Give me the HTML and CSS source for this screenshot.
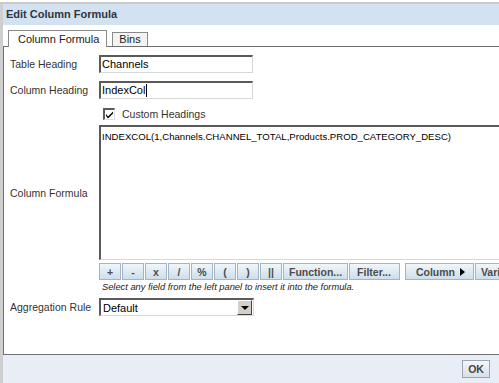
FILE: index.html
```html
<!DOCTYPE html>
<html lang="en">
<head>
  <meta charset="UTF-8">
  <title>Edit Column Formula</title>
  <link rel="stylesheet" href="styles.css">
</head>
<body>

<div class="dialog">
  <div class="title">Edit Column Formula</div>

  <div class="tabs">
    <div class="tab active">Column Formula</div>
    <div class="tab">Bins</div>
  </div>

  <div class="panel">
    <div class="form">
      <label class="lbl spaced">Table Heading</label>
      <div class="field">Channels</div>

      <label class="lbl spaced">Column Heading</label>
      <div class="field">IndexCol<span class="caret"></span></div>

      <span></span>
      <div class="check-row">
        <span class="checkbox">
          <svg width="9" height="9" viewBox="0 0 9 9"><path d="M1 4 L3 6.5 L8 1.5 L8 3.5 L3 8.5 L1 6 Z" fill="#000"/></svg>
        </span>
        Custom Headings
      </div>

      <label class="lbl">Column Formula</label>
      <div class="formula">INDEXCOL(1,Channels.CHANNEL_TOTAL,Products.PROD_CATEGORY_DESC)</div>

      <span></span>
      <div class="toolbar">
        <button class="op">+</button>
        <button class="op">-</button>
        <button class="op">x</button>
        <button class="op">/</button>
        <button class="op">%</button>
        <button class="op">(</button>
        <button class="op">)</button>
        <button class="op">||</button>
        <button class="wide">Function...</button>
        <button class="wide filter">Filter...</button>
        <button class="wide menu">Column <span class="tri"></span></button>
        <button class="wide">Variable</button>
      </div>

      <span></span>
      <div class="hint">Select any field from the left panel to insert it into the formula.</div>

      <label class="lbl">Aggregation Rule</label>
      <div class="select">
        <span class="sel-text">Default</span>
        <span class="sel-btn"><span class="down"></span></span>
      </div>
    </div>
  </div>

  <div class="footer">
    <button class="ok">OK</button>
  </div>
</div>

</body>
</html>
```

FILE: styles.css
```css
body {
  margin: 0;
  padding: 0;
  background-color: #fff;
  font-family: "Liberation Sans", Arial, sans-serif;
  overflow: hidden;
  width: 499px;
  height: 383px;
}

.dialog {
  margin-top: 2px;
  height: 381px;
  border-top: 2px solid #c9c9c9;
  border-left: 3px solid #cfcfcf;
  box-sizing: border-box;
  display: flex;
  flex-direction: column;
}

.title {
  height: 21px;
  line-height: 21px;
  padding-left: 3px;
  background-color: #d3e2f1;
  color: #2f3640;
  font-size: 11px;
  font-weight: bold;
}

.tabs {
  height: 21px;
  display: flex;
  align-items: flex-end;
  padding-left: 5px;
  gap: 5px;
}

.tab {
  font-size: 11px;
  color: #222;
  border: 1px solid #8a8a8a;
  border-bottom: none;
  background-color: #f4f4f4;
  height: 13px;
  line-height: 13px;
  padding: 0 6px;
}

.tab.active {
  background-color: #fff;
  height: 16px;
  line-height: 17px;
  padding: 0 7px 0 9px;
  margin-bottom: -1px;
  position: relative;
  z-index: 1;
}

.panel {
  flex: 1;
  border: 1px solid #6f6f6f;
  margin-right: -30px;
  background-color: #fff;
}

.form {
  display: grid;
  grid-template-columns: 89px 1fr;
  align-items: center;
  padding: 8px 0 0 6px;
  font-size: 10.5px;
  color: #333;
}

.lbl {
  font-size: 10.5px;
}

.lbl.spaced {
  margin-bottom: 8px;
}

.field {
  width: 150px;
  height: 15px;
  line-height: 15px;
  border-style: solid;
  border-width: 2px 1px 1px 2px;
  border-color: #5a5a5a #d8d8d8 #d8d8d8 #5a5a5a;
  font-size: 11px;
  color: #000;
  padding-left: 1px;
  margin-bottom: 8px;
  display: flex;
  align-items: center;
}

.caret {
  display: inline-block;
  width: 1px;
  height: 13px;
  background-color: #000;
  margin-left: 1px;
}

.check-row {
  display: flex;
  align-items: center;
  height: 18px;
  gap: 7px;
  padding-left: 4px;
  margin: -2px 0 2px;
}

.checkbox {
  width: 9px;
  height: 9px;
  border-style: solid;
  border-width: 2px 1px 1px 2px;
  border-color: #5a5a5a #e0e0e0 #e0e0e0 #5a5a5a;
  display: flex;
  align-items: center;
  justify-content: center;
}

.formula {
  border-style: solid;
  border-width: 2px 1px 1px 2px;
  border-color: #5a5a5a #d8d8d8 #d8d8d8 #5a5a5a;
  font-size: 9.6px;
  color: #000;
  padding: 4px 1px;
  box-sizing: content-box;
  height: 124px;
  margin-right: -10px;
}

.toolbar {
  display: flex;
  gap: 1px;
  margin-top: 3px;
  height: 17px;
}

.toolbar button {
  height: 17px;
  padding: 0;
  border: 1px solid #a3b4c3;
  background: linear-gradient(#f1f6fa, #cddeea);
  font-family: "Liberation Sans", Arial, sans-serif;
  font-size: 10.5px;
  font-weight: bold;
  color: #4c4c4c;
  flex: none;
}

.toolbar .op {
  width: 22px;
}

.toolbar .wide {
  padding: 0 5px;
}

.toolbar .filter {
  padding: 0 8px 0 7px;
}

.toolbar .menu {
  margin-left: 4px;
  padding: 0 8px 0 10px;
}

.tri {
  display: inline-block;
  width: 0;
  height: 0;
  border-top: 4px solid transparent;
  border-bottom: 4px solid transparent;
  border-left: 5px solid #000;
  margin-left: 2px;
}

.hint {
  font-size: 9.3px;
  font-style: italic;
  color: #222;
  padding-left: 3px;
  height: 14px;
  line-height: 14px;
  margin-bottom: 4px;
}

.select {
  width: 152px;
  height: 15px;
  border-style: solid;
  border-width: 2px 1px 1px 2px;
  border-color: #5a5a5a #d8d8d8 #d8d8d8 #5a5a5a;
  display: flex;
  align-items: center;
  font-size: 11px;
  color: #000;
}

.sel-text {
  flex: 1;
  padding-left: 2px;
}

.sel-btn {
  width: 13px;
  height: 13px;
  background-color: #d4d0c8;
  border-style: solid;
  border-width: 1px;
  border-color: #fff #404040 #404040 #fff;
  display: flex;
  align-items: center;
  justify-content: center;
  margin-right: 1px;
}

.down {
  width: 0;
  height: 0;
  border-left: 4px solid transparent;
  border-right: 4px solid transparent;
  border-top: 4px solid #000;
}

.footer {
  height: 28px;
  background-color: #e9edf6;
  display: flex;
  justify-content: flex-end;
  align-items: flex-start;
  padding: 5px 9px 0 0;
  box-sizing: border-box;
}

.ok {
  width: 28px;
  height: 18px;
  padding: 0;
  border: 1px solid #9aa6b2;
  background: linear-gradient(#f4f7fa, #d7dfe7);
  font-family: "Liberation Sans", Arial, sans-serif;
  font-size: 10.5px;
  font-weight: bold;
  color: #444;
}
```
